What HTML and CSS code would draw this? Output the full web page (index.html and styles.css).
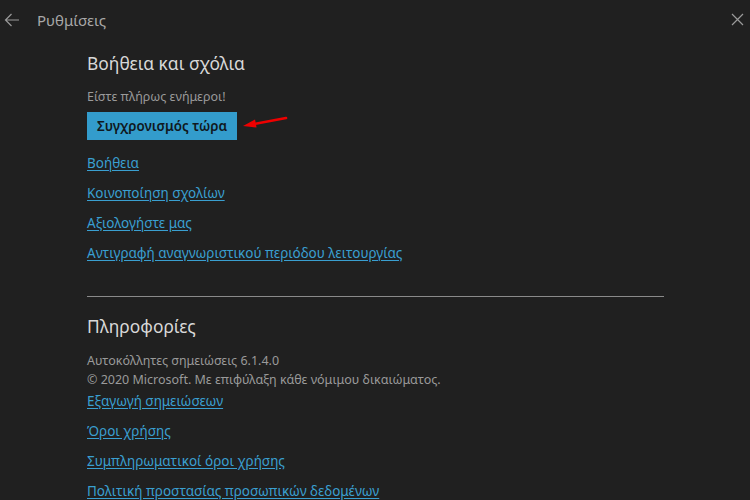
FILE: index.html
```html
<!DOCTYPE html>
<html lang="el">
<head>
<meta charset="utf-8">
<link rel="stylesheet" href="styles.css">
</head>
<body>
<div class="app">
  <header class="titlebar">
    <svg class="back" width="16" height="14" viewBox="0 0 16 14"><path d="M15 7H1.5M7.5 1L1.5 7l6 6" fill="none" stroke="#9a9a9a" stroke-width="1.2"/></svg>
    <span class="title">Ρυθμίσεις</span>
    <svg class="close" width="13" height="13" viewBox="0 0 13 13"><path d="M1 1l11 11M12 1L1 12" fill="none" stroke="#9a9a9a" stroke-width="1.2"/></svg>
  </header>
  <main class="content">
    <section class="section">
      <h2 class="heading">Βοήθεια και σχόλια</h2>
      <p class="muted status">Είστε πλήρως ενήμεροι!</p>
      <div class="btn-row">
        <button class="btn">Συγχρονισμός τώρα</button>
        <svg class="arrow" width="50" height="16" viewBox="0 0 50 16"><path d="M46 3L14 9" stroke="#e00" stroke-width="2.6" stroke-linecap="round"/><path d="M3 11L15 4.5L16.5 12.5Z" fill="#e00"/></svg>
      </div>
      <ul class="links">
        <li><a href="#">Βοήθεια</a></li>
        <li><a href="#">Κοινοποίηση σχολίων</a></li>
        <li><a href="#">Αξιολογήστε μας</a></li>
        <li><a href="#">Αντιγραφή αναγνωριστικού περιόδου λειτουργίας</a></li>
      </ul>
    </section>
    <hr class="divider">
    <section class="section">
      <h2 class="heading heading2">Πληροφορίες</h2>
      <p class="muted info">Αυτοκόλλητες σημειώσεις 6.1.4.0<br>© 2020 Microsoft. Με επιφύλαξη κάθε νόμιμου δικαιώματος.</p>
      <ul class="links links2">
        <li><a href="#">Εξαγωγή σημειώσεων</a></li>
        <li><a href="#">Όροι χρήσης</a></li>
        <li><a href="#">Συμπληρωματικοί όροι χρήσης</a></li>
        <li><a href="#">Πολιτική προστασίας προσωπικών δεδομένων</a></li>
      </ul>
    </section>
  </main>
</div>
</body>
</html>
```
FILE: styles.css
```css
* { box-sizing: border-box; }
html, body { margin: 0; padding: 0; background: #202020; }
body { font-family: "Noto Sans", "Open Sans", sans-serif; color: #cfcfcf; width: 750px; height: 500px; overflow: hidden; }
.titlebar { height: 40px; display: flex; align-items: center; }
.back { margin-left: 4px; }
.title { margin-left: 17px; font-size: 15px; color: #a8a8a8; }
.close { margin-left: auto; margin-right: 6px; margin-top: -1px; }
.content { padding-left: 87px; width: 664px; }
.section { display: flex; flex-direction: column; align-items: flex-start; }
.heading { font-weight: normal; font-size: 17.4px; color: #d8d8d8; margin: 11px 0 0; line-height: 24px; }
.heading2 { margin-top: 17px; }
.muted { color: #9a9a9a; font-size: 12.5px; margin: 0; }
.status { margin-top: 13px; line-height: 18px; }
.btn-row { display: flex; align-items: center; margin-top: 6px; }
.btn { background: #339ccc; color: #101820; border: none; font-family: inherit; font-size: 13.4px; font-weight: 600; height: 28px; padding: 0; width: 150px; }
.arrow { margin-left: 3px; margin-top: -6px; }
.links { list-style: none; margin: 8px 0 0; padding: 0; }
.links li { font-size: 13.5px; line-height: 30px; height: 30px; }
.links a { color: #3a9fd0; text-decoration: underline; text-underline-offset: 2px; }
.divider { border: none; border-top: 1px solid #8a8a8a; margin: 28px 0 0; width: 577px; }
.info { margin-top: 13px; line-height: 19px; }
.links2 { margin-top: -3px; }
```
